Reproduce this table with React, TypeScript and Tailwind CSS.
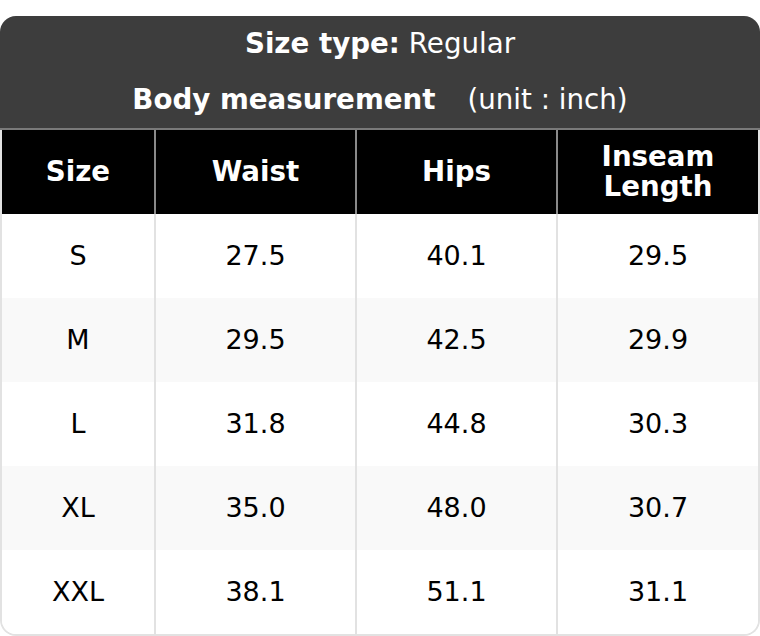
import React from 'react';

interface SizeRow {
  size: string;
  waist: string;
  hips: string;
  inseam: string;
}

const rows: SizeRow[] = [
  { size: 'S', waist: '27.5', hips: '40.1', inseam: '29.5' },
  { size: 'M', waist: '29.5', hips: '42.5', inseam: '29.9' },
  { size: 'L', waist: '31.8', hips: '44.8', inseam: '30.3' },
  { size: 'XL', waist: '35.0', hips: '48.0', inseam: '30.7' },
  { size: 'XXL', waist: '38.1', hips: '51.1', inseam: '31.1' },
];

const font = { fontFamily: '"DejaVu Sans", "Liberation Sans", sans-serif' };

const App: React.FC = () => {
  return (
    <div className="w-[760px] h-[636px] bg-white pt-4" style={font}>
      <div className="rounded-t-2xl overflow-hidden bg-[#3d3d3d] text-white text-[27.7px]">
        <div className="h-14 flex items-center justify-center">
          <span className="font-bold">Size type:</span>
          <span className="ml-[9px]">Regular</span>
        </div>
        <div className="h-14 flex items-center justify-center">
          <span className="font-bold">Body measurement</span>
          <span className="ml-[32px]">(unit : inch)</span>
        </div>
      </div>
      <div className="border-t-2 border-[#7a7a7a]">
        <div className="border-x-2 border-b-2 border-[#e2e2e2] rounded-b-2xl overflow-hidden">
          <div className="grid grid-cols-[154px_201px_201px_1fr] bg-black text-white font-bold text-[27.7px] leading-[30px] h-[84px]">
            <div className="border-r-2 border-[#8a8a8a] flex items-center justify-center">Size</div>
            <div className="border-r-2 border-[#8a8a8a] flex items-center justify-center">Waist</div>
            <div className="border-r-2 border-[#8a8a8a] flex items-center justify-center">Hips</div>
            <div className="flex items-center justify-center text-center">
              Inseam
              <br />
              Length
            </div>
          </div>
          {rows.map((r, i) => (
            <div
              key={r.size}
              className={`grid grid-cols-[154px_201px_201px_1fr] h-[84px] text-[27px] text-black ${i % 2 === 1 ? 'bg-[#f9f9f9]' : 'bg-white'}`}
            >
              <div className="border-r-2 border-[#e2e2e2] flex items-center justify-center">{r.size}</div>
              <div className="border-r-2 border-[#e2e2e2] flex items-center justify-center">{r.waist}</div>
              <div className="border-r-2 border-[#e2e2e2] flex items-center justify-center">{r.hips}</div>
              <div className="flex items-center justify-center">{r.inseam}</div>
            </div>
          ))}
        </div>
      </div>
    </div>
  );
};

export default App;
